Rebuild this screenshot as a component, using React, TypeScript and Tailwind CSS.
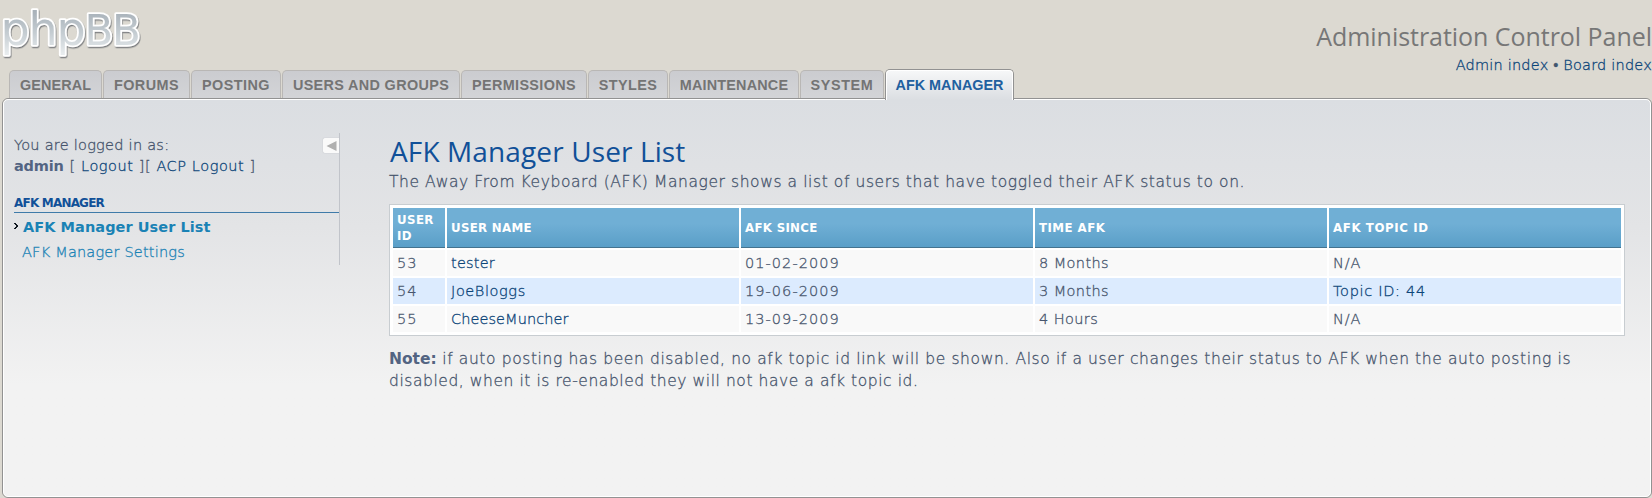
import React from "react";

const tabs = [
  { label: "GENERAL", width: "w-[93px]", spacing: "tracking-[0.1px]" },
  { label: "FORUMS", width: "w-[87px]", spacing: "tracking-[0.45px]" },
  { label: "POSTING", width: "w-[90px]", spacing: "tracking-[0.45px]" },
  { label: "USERS AND GROUPS", width: "w-[178px]", spacing: "tracking-[0.35px]" },
  { label: "PERMISSIONS", width: "w-[126px]", spacing: "tracking-[0.35px]" },
  { label: "STYLES", width: "w-[80px]", spacing: "tracking-[0.4px]" },
  { label: "MAINTENANCE", width: "w-[130px]", spacing: "tracking-[0.2px]" },
  { label: "SYSTEM", width: "w-[84px]", spacing: "tracking-[0.6px]" },
];

const headers = [
  { label: "USER ID", spacing: "tracking-[0.4px]" },
  { label: "USER NAME", spacing: "tracking-[0.3px]" },
  { label: "AFK SINCE", spacing: "tracking-[0.3px]" },
  { label: "TIME AFK", spacing: "tracking-[0.45px]" },
  { label: "AFK TOPIC ID", spacing: "tracking-[0.6px]" },
];

const rows = [
  { id: "53", name: "tester", nameSpacing: "tracking-[0.2px]", since: "01-02-2009", time: "8 Months", topic: "N/A", linked: false },
  { id: "54", name: "JoeBloggs", nameSpacing: "tracking-[0.6px]", since: "19-06-2009", time: "3 Months", topic: "Topic ID: 44", linked: true },
  { id: "55", name: "CheeseMuncher", nameSpacing: "tracking-[0.08px]", since: "13-09-2009", time: "4 Hours", topic: "N/A", linked: false },
];

function Logo() {
  return (
    <svg width="150" height="66" viewBox="0 0 150 66" className="block shrink-0 [-webkit-text-stroke:initial]">
      <defs>
        <linearGradient id="logoFill" gradientUnits="userSpaceOnUse" x1="0" y1="12" x2="0" y2="54">
          <stop offset="0" stopColor="#a9b2ba" />
          <stop offset="0.5" stopColor="#c5cdd2" />
          <stop offset="1" stopColor="#e8ecee" />
        </linearGradient>
        <filter id="logoShadow" x="-5%" y="-5%" width="115%" height="120%">
          <feDropShadow dx="0.7" dy="1.3" stdDeviation="0.7" floodColor="#6d7073" floodOpacity="0.9" />
        </filter>
      </defs>
      <g
        filter="url(#logoShadow)"
        fill="url(#logoFill)"
        stroke="#ffffff"
        strokeWidth="3.6"
        strokeLinejoin="round"
        paintOrder="stroke"
        fontFamily="'DejaVu Sans', sans-serif"
        fontWeight="400"
      >
        <text y="45">
          <tspan x="0.5 28.5 56.5" fontSize="46">php</tspan>
          <tspan x="84.5 112" fontSize="42">BB</tspan>
        </text>
      </g>
    </svg>
  );
}

function Header() {
  return (
    <header className="flex h-[69px] justify-between">
      <Logo />
      <div className="flex flex-col items-end pt-[21px]">
        <h1 className="font-['Open_Sans',sans-serif] text-[25px] leading-[30px] font-normal tracking-[-0.04px] text-[#777777] [-webkit-text-stroke:0px]">
          Administration Control Panel
        </h1>
        <p className="pt-[2px] text-[14.5px] leading-[24px] tracking-[0.2px] text-[#40566f]">
          <a className="text-[#0b4478]">Admin index</a> • <a className="text-[#0b4478]">Board index</a>
        </p>
      </div>
    </header>
  );
}

function Tabs() {
  return (
    <nav className="relative z-10 -mb-[2px] flex h-[31px] items-start gap-px pl-[9px] font-['Liberation_Sans',Arial,sans-serif] text-[14.4px] font-bold text-[#747474] [-webkit-text-stroke:0px]">
      {tabs.map((t) => (
        <a
          key={t.label}
          className={`${t.width} ${t.spacing} mt-px flex h-[28px] shrink-0 justify-center rounded-t-[5px] border border-b-0 border-[#b9b7b5] bg-linear-to-b from-[#cbccd0] to-[#d3d4d7] leading-[28px] whitespace-nowrap`}
        >
          {t.label}
        </a>
      ))}
      <a className="flex h-[31px] w-[129px] shrink-0 rounded-t-[5px] border border-b-0 border-[#929292]">
        <span className="flex flex-1 justify-center rounded-t-[4px] border border-b-0 border-white bg-linear-to-b from-[#f6f7f8] to-[#dbdee2] leading-[28px] text-[#21609f]">
          AFK MANAGER
        </span>
      </a>
    </nav>
  );
}

function Sidebar() {
  return (
    <aside className="mt-[33px] ml-[10px] flex h-[132px] w-[326px] shrink-0 flex-col border-r border-[#c1c4ca]">
      <div className="flex justify-between pt-[2px]">
        <div className="text-[14.5px] leading-[21px] whitespace-nowrap text-[#46546c]">
          <p className="tracking-[0.26px]">You are logged in as:</p>
          <p className="flex gap-[6px]">
            <strong className="font-bold tracking-[-0.2px] text-[#536482] [-webkit-text-stroke:0px]">admin</strong>
            <span className="tracking-[0.57px]">
              [ <a className="text-[#0b4478]">Logout</a> ][ <a className="text-[#0b4478]">ACP Logout</a> ]
            </span>
          </p>
        </div>
        <button className="mt-[2px] flex h-[17px] w-[17px] items-center justify-center rounded-l-[3px] border border-r-0 border-[#d8dade] bg-[#fafafa]">
          <svg width="11" height="10" viewBox="0 0 11 10">
            <path d="M0.5 5 L10.5 0 V10 Z" fill="#b0b0b0" />
          </svg>
        </button>
      </div>
      <h3 className="mt-[19px] h-[17px] border-b border-[#3f7ba9] text-[12px] leading-[15px] font-bold tracking-[-0.8px] text-[#115098] [-webkit-text-stroke:0px]">
        AFK MANAGER
      </h3>
      <div className="flex h-[29px] items-center text-[14.5px] font-bold tracking-[0.05px] text-[#1a82b5] [-webkit-text-stroke:0px]">
        <svg width="5" height="7" viewBox="0 0 5 7" className="mr-[4px] mb-[3px]">
          <path d="M0 0h2v1h1v1h1v2H3v1H2v1H0V5h1V4h1V2H1V1H0Z" fill="#101820" />
        </svg>
        AFK Manager User List
      </div>
      <a className="-mt-px pl-[8px] text-[14.5px] leading-[23px] tracking-[0.2px] text-[#1a82b5]">AFK Manager Settings</a>
    </aside>
  );
}

function UserTable() {
  return (
    <div className="mt-[11px] border border-[#c8cdd1] bg-white p-[3px]">
      <div className="grid grid-cols-[52px_repeat(4,292px)] gap-[2px]">
        {headers.map((h) => (
          <div
            key={h.label}
            className={`${h.spacing} flex h-[40px] items-center border-b border-[#44738f] bg-linear-to-b from-[#70afd5] from-40% to-[#5a9fc8] px-[4px] pt-px text-[11.8px] leading-[16px] font-bold text-white [-webkit-text-stroke:0px]`}
          >
            {h.label}
          </div>
        ))}
        {rows.map((r, i) => {
          const cell = `flex h-[26px] items-center pl-[4px] pt-[2px] text-[14.5px] text-[#46546c] ${i === 1 ? "bg-[#dcebfe]" : "bg-[#f9f9f9]"}`;
          return (
            <React.Fragment key={r.id}>
              <div className={cell}>
                <span className="tracking-[0.9px]">{r.id}</span>
              </div>
              <div className={cell}>
                <a className={`${r.nameSpacing} text-[#0b4478]`}>{r.name}</a>
              </div>
              <div className={cell}>
                <span className="tracking-[1.05px]">{r.since}</span>
              </div>
              <div className={cell}>
                <span className="tracking-[0.4px]">{r.time}</span>
              </div>
              <div className={cell}>
                {r.linked ? (
                  <a className="tracking-[0.7px] text-[#0b4478]">{r.topic}</a>
                ) : (
                  <span className="tracking-[0.9px]">{r.topic}</span>
                )}
              </div>
            </React.Fragment>
          );
        })}
      </div>
    </div>
  );
}

export default function App() {
  return (
    <div className="flex h-[498px] w-[1652px] flex-col overflow-hidden bg-[#dcd9d1] font-['DejaVu_Sans',Verdana,sans-serif] font-extralight [-webkit-text-stroke:0.3px]">
      <Header />
      <Tabs />
      <div className="ml-[2px] flex flex-1 rounded-[6px] border border-[#929292]">
        <div className="flex flex-1 rounded-[5px] border border-white bg-linear-to-b from-[#dbdee2] via-[#e3e4e6] via-32% to-[#f2f2f2] to-72%">
          <Sidebar />
          <main className="mt-[33px] ml-[49px] w-[1236px] shrink-0">
            <h2 className="-mt-px mb-px pl-px font-['Open_Sans',sans-serif] text-[28px] leading-[38px] font-normal tracking-[0.12px] text-[#115098] [-webkit-text-stroke:0px]">
              AFK Manager User List
            </h2>
            <p className="text-[15.5px] leading-[22px] tracking-[0.59px] text-[#46546c]">
              The Away From Keyboard (AFK) Manager shows a list of users that have toggled their AFK status to on.
            </p>
            <UserTable />
            <p className="mt-[12px] text-[15.5px] leading-[22px] tracking-[0.613px] text-[#46546c]">
              <strong className="font-bold tracking-[0px] text-[#536482] [-webkit-text-stroke:0px]">Note:</strong> if auto posting has been disabled, no afk topic id link will be shown. Also if a user changes their status to AFK when the auto posting is
              <br />
              <span className="tracking-[0.57px]">disabled, when it is re-enabled they will not have a afk topic id.</span>
            </p>
          </main>
        </div>
      </div>
    </div>
  );
}
